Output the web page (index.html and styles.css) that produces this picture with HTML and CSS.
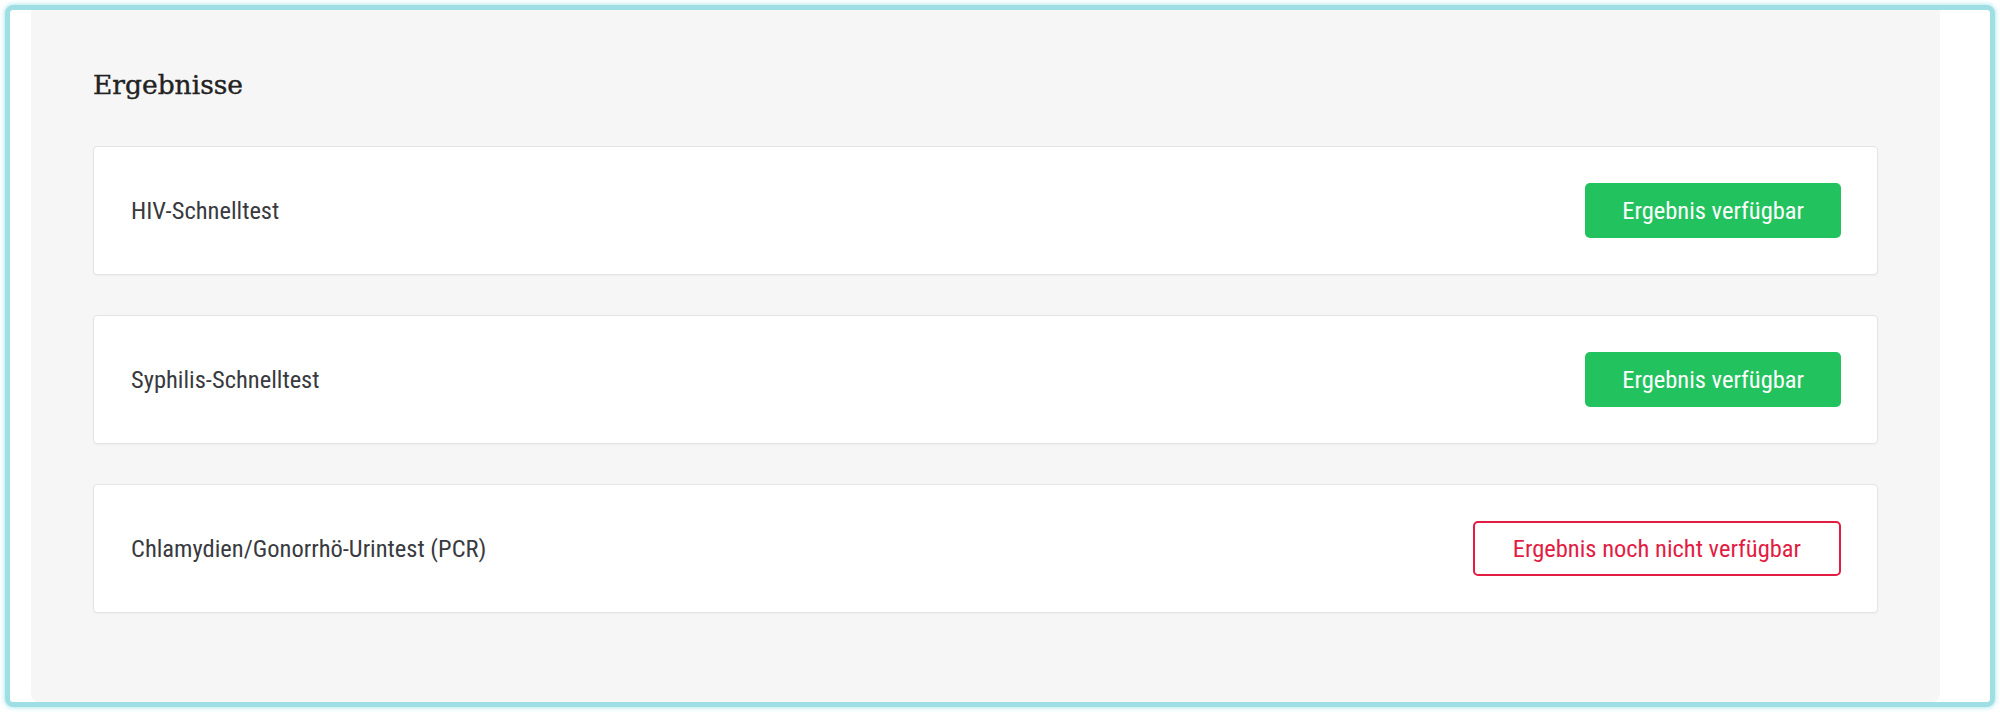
FILE: index.html
```html
<!DOCTYPE html>
<html lang="de">
<head>
    <meta charset="UTF-8">
    <meta name="viewport" content="width=device-width, initial-scale=1.0">
    <title>Ergebnisse</title>
    <link rel="stylesheet" href="styles.css">
</head>
<body>
    <div class="frame">
        <div class="panel">
            <h2>Ergebnisse</h2>

            <!-- Test results -->
            <div class="result-list">
                <div class="result-card">
                    <span class="test-name">HIV-Schnelltest</span>
                    <button class="status status-ready">Ergebnis verfügbar</button>
                </div>
                <div class="result-card">
                    <span class="test-name">Syphilis-Schnelltest</span>
                    <button class="status status-ready">Ergebnis verfügbar</button>
                </div>
                <div class="result-card">
                    <span class="test-name">Chlamydien/Gonorrhö-Urintest (PCR)</span>
                    <button class="status status-pending">Ergebnis noch nicht verfügbar</button>
                </div>
            </div>
        </div>
    </div>
</body>
</html>
```

FILE: styles.css
```css
body {
    margin: 0;
    background: #fff;
    font-family: Roboto, "Noto Sans", sans-serif;
}
.frame {
    margin: 5px;
    height: 692px;
    border: 5px solid #9fdfe4;
    border-radius: 8px;
    box-shadow: 0 0 4px 1px #b5e9ec;
    padding: 0 50px 0 21px;
    display: flex;
}
.panel {
    flex: 1;
    background: #f6f6f6;
    border-radius: 0 0 8px 8px;
    padding: 59px 62px 0 62px;
}
h2 {
    margin: 0 0 45px 0;
    font-family: "DejaVu Serif", serif;
    font-weight: normal;
    font-size: 26.5px;
    line-height: 32px;
    color: #222;
    -webkit-text-stroke: 0.4px #222;
}
.result-list {
    display: flex;
    flex-direction: column;
    gap: 40px;
}
.result-card {
    display: flex;
    justify-content: space-between;
    align-items: center;
    background: #fff;
    border: 1px solid #e4e4e4;
    border-radius: 4px;
    box-shadow: 0 1px 2px rgba(0, 0, 0, 0.04);
    padding: 36px 36px 36px 37px;
}
.test-name {
    font-size: 24.5px;
    font-stretch: condensed;
    color: #383a40;
}
.status {
    height: 55px;
    box-sizing: border-box;
    padding: 0 37px;
    border-radius: 5px;
    font-family: Roboto, sans-serif;
    font-size: 24.5px;
    font-stretch: condensed;
    cursor: pointer;
}
.status-ready {
    background: #22c35e;
    border: none;
    color: #fff;
}
.status-pending {
    background: #fff;
    border: 2px solid #e21c43;
    color: #e21c43;
    padding: 0 38px;
}
```
